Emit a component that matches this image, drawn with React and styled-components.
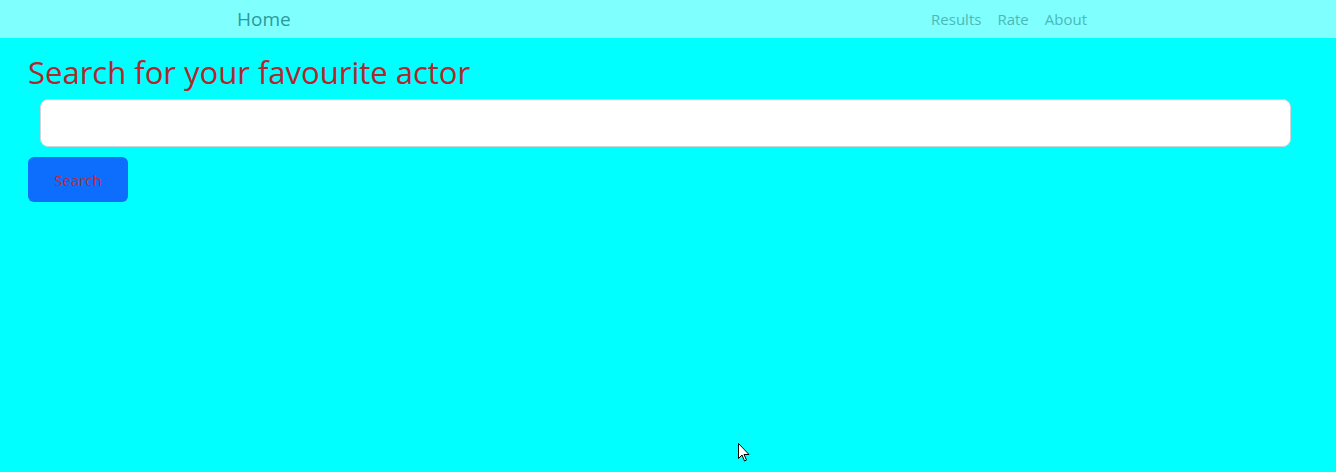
import React from "react";
import styled, { createGlobalStyle } from "styled-components";

const GlobalStyle = createGlobalStyle`
  html, body {
    margin: 0;
    padding: 0;
    background: #00ffff;
    font-family: "Open Sans", "Noto Sans", sans-serif;
  }
`;

const Page = styled.div`
  position: relative;
  min-height: 472px;
  background: #00ffff;
`;

const Navbar = styled.nav`
  display: flex;
  align-items: center;
  justify-content: space-between;
  height: 38px;
  padding: 0 249px 0 237px;
  background: #80ffff;
`;

const Brand = styled.a`
  font-size: 19px;
  color: #2a9a9a;
  text-decoration: none;
`;

const NavLinks = styled.div`
  display: flex;
  gap: 16px;
`;

const NavLink = styled.a`
  font-size: 15px;
  color: #4cb8b8;
  text-decoration: none;
`;

const Main = styled.main`
  padding: 15px 28px 0 28px;
`;

const Title = styled.h2`
  margin: 0;
  font-size: 31px;
  font-weight: 400;
  line-height: 38px;
  color: #b5262b;
`;

const SearchInput = styled.input`
  display: block;
  box-sizing: border-box;
  width: calc(100% - 29px);
  height: 48px;
  margin: 8px 17px 0 12px;
  border: 1px solid #ced4da;
  border-radius: 8px;
  background: #fff;
  outline: none;
`;

const SearchButton = styled.button`
  display: block;
  width: 100px;
  height: 45px;
  margin-top: 10px;
  border: none;
  border-radius: 6px;
  background: #0d6efd;
  color: #c0283a;
  font-family: "Open Sans", "Noto Sans", sans-serif;
  font-size: 15px;
`;

const Cursor = styled.svg`
  position: absolute;
  left: 738px;
  top: 443px;
`;

export default function App() {
  return (
    <Page>
      <GlobalStyle />
      <Navbar>
        <Brand href="#">Home</Brand>
        <NavLinks>
          <NavLink href="#">Results</NavLink>
          <NavLink href="#">Rate</NavLink>
          <NavLink href="#">About</NavLink>
        </NavLinks>
      </Navbar>
      <Main>
        <Title>Search for your favourite actor</Title>
        <SearchInput type="text" />
        <SearchButton>Search</SearchButton>
      </Main>
      <Cursor width="13" height="20" viewBox="0 0 13 20">
        <path
          d="M0.5 0.5 L0.5 15.5 L4 12 L6.5 18 L8.5 17 L6 11.5 L11 11.5 Z"
          fill="#fff"
          stroke="#000"
          strokeWidth="1"
        />
      </Cursor>
    </Page>
  );
}
